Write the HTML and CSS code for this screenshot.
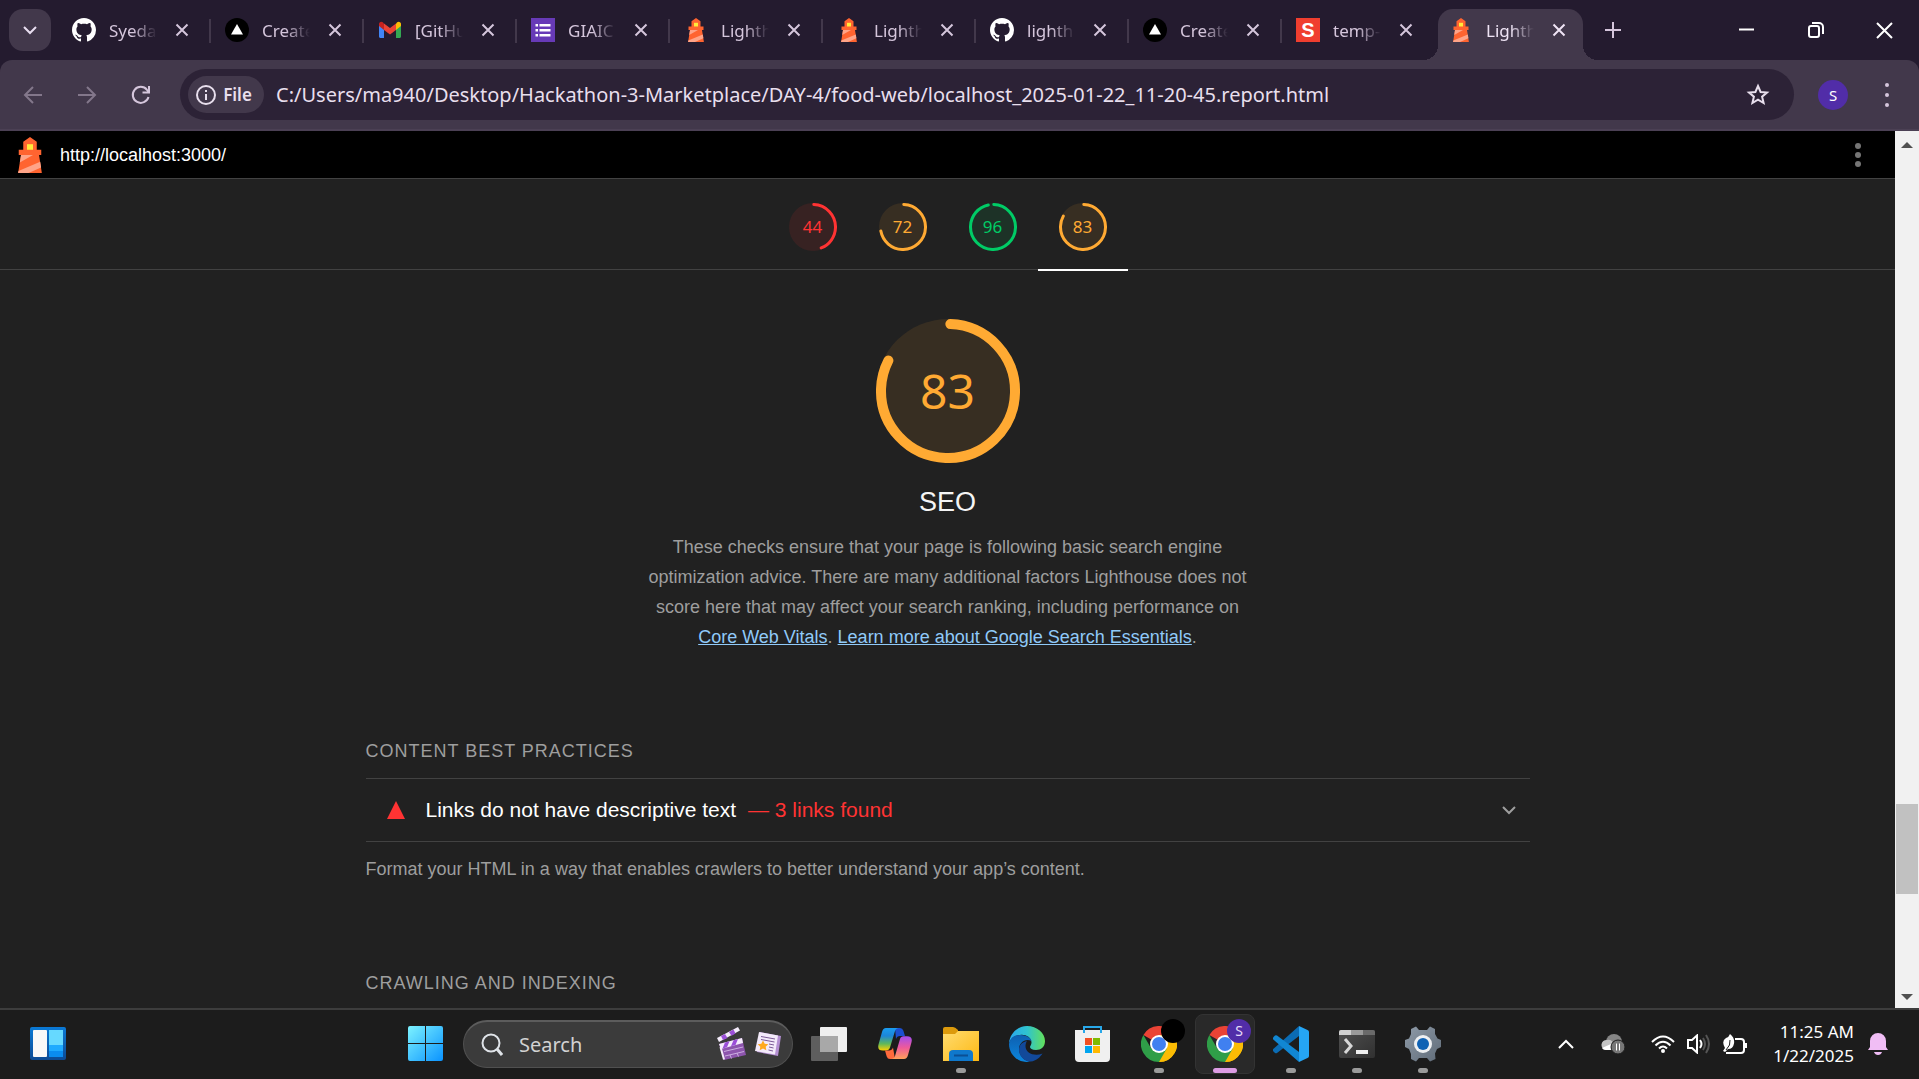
FILE: index.html
```html
<!DOCTYPE html>
<html lang="en">
<head>
<meta charset="utf-8">
<title>Lighthouse Report</title>
<meta name="viewport" content="width=device-width, initial-scale=1">
<link rel="stylesheet" href="styles.css">
</head>
<body>
<svg class="defs" aria-hidden="true">
  <defs>
    <linearGradient id="g-win" x1="0" y1="0" x2="1" y2="1"><stop offset="0" stop-color="#7df3ff"/><stop offset="1" stop-color="#0a93ff"/></linearGradient>
    <linearGradient id="g-wid" x1="0" y1="0" x2="0" y2="1"><stop offset="0" stop-color="#0a7ad6"/><stop offset="1" stop-color="#0c4a94"/></linearGradient>
    <linearGradient id="g-fold" x1="0" y1="0" x2="1" y2="1"><stop offset="0" stop-color="#ffdc70"/><stop offset="1" stop-color="#fdb813"/></linearGradient>
    <linearGradient id="g-edge1" x1="0" y1="0" x2="1" y2="0"><stop offset="0" stop-color="#2aa7ee"/><stop offset=".5" stop-color="#2fc3cf"/><stop offset="1" stop-color="#63e05a"/></linearGradient>
    <linearGradient id="g-edge2" x1="0" y1="0" x2="0" y2="1"><stop offset="0" stop-color="#0e5fb0"/><stop offset="1" stop-color="#0b86dd"/></linearGradient>
    <linearGradient id="g-cop1" x1="0" y1="0" x2="0" y2="1"><stop offset="0" stop-color="#1a9cf0"/><stop offset=".35" stop-color="#1c86d8"/><stop offset=".7" stop-color="#5fb85a"/><stop offset="1" stop-color="#ffd000"/></linearGradient>
    <linearGradient id="g-cop2" x1="0" y1="0" x2="0" y2="1"><stop offset="0" stop-color="#a24df0"/><stop offset=".5" stop-color="#ee5a9a"/><stop offset="1" stop-color="#ffa05a"/></linearGradient>
    <linearGradient id="g-grey" x1="0" y1="0" x2="1" y2="1"><stop offset="0" stop-color="#8f9ba8"/><stop offset="1" stop-color="#5f6b78"/></linearGradient>
    <linearGradient id="g-term" x1="0" y1="0" x2="1" y2="1"><stop offset="0" stop-color="#505050"/><stop offset="1" stop-color="#303030"/></linearGradient>
    <symbol id="i-x" viewBox="0 0 14 14"><path d="M1.500 1.500l11 11M12.500 1.500l-11 11" stroke="currentColor" stroke-width="2" fill="none"/></symbol>
    <symbol id="i-github" viewBox="0 0 16 16"><path fill="#fff" d="M8 0C3.580 0 0 3.580 0 8c0 3.540 2.290 6.530 5.470 7.590.4.070.55-.17.55-.38 0-.19-.01-.82-.01-1.490-2.010.37-2.530-.49-2.690-.94-.09-.23-.48-.94-.82-1.130-.28-.15-.68-.52-.01-.53.63-.01 1.080.58 1.230.82.72 1.210 1.870.87 2.330.66.07-.52.28-.87.51-1.070-1.780-.2-3.640-.89-3.640-3.950 0-.87.31-1.590.82-2.150-.08-.2-.36-1.020.08-2.120 0 0 .67-.21 2.200.82.64-.18 1.320-.27 2-.27s1.360.09 2 .27c1.530-1.040 2.200-.82 2.200-.82.44 1.100.16 1.920.08 2.120.51.56.82 1.270.82 2.150 0 3.070-1.870 3.750-3.650 3.950.29.25.54.73.54 1.480 0 1.070-.01 1.930-.01 2.200 0 .21.15.46.55.38A8.010 8.010 0 0 0 16 8c0-4.420-3.580-8-8-8z"/></symbol>
    <symbol id="i-vercel" viewBox="0 0 24 24"><circle cx="12" cy="12" r="12" fill="#000"/><path d="M12 6l6 10.500H6z" fill="#fff"/></symbol>
    <symbol id="i-gmail" viewBox="0 0 24 24"><path d="M1 6v12.500C1 19.300 1.700 20 2.500 20H6V10z" fill="#4285f4"/><path d="M23 6v12.500c0 .8-.7 1.500-1.500 1.500H18V10z" fill="#34a853"/><path d="M18 5.500V12l5-4V6c0-2-2.300-3-3.800-1.800z" fill="#fbbc04"/><path d="M6 12V5.500l6 4.600 6-4.600V12l-6 4.600z" fill="#ea4335"/><path d="M1 6v2l5 4V5.500L4.800 4.200C3.300 3 1 4 1 6z" fill="#c5221f"/></symbol>
    <symbol id="i-forms" viewBox="0 0 24 24"><path fill="#673ab7" d="M0 0h24v24H0z"/><path d="M4.500 6h2.500v2.500H4.500zM4.500 11h2.500v2.500H4.500zM4.500 16h2.500v2.500H4.500zM8.500 6h11v2.500h-11zM8.500 11h11v2.500h-11zM8.500 16h11v2.500h-11z" fill="#fff"/></symbol>
    <symbol id="i-lh" viewBox="3 0 18 24"><path d="M12 0l4.500 3.200V8.500h3V12H18l1.900 12H4.100L6 12H4.500V8.500h3V3.200z" fill="#ff6430"/><path d="M6 12h8L5.200 17zM18.800 16.500l.6 3.800L11 24H4.100l.2-1.400z" fill="#ffa488"/><path d="M10 4.800h4v3.700h-4z" fill="#ffeb3b"/></symbol>
    <symbol id="i-chrome" viewBox="0 0 36 36"><path d="M18 18L2.400 9A18 18 0 0 1 33.600 9z" fill="#ea4335"/><path d="M18 18L33.600 9A18 18 0 0 1 18 36z" fill="#fbbc04"/><path d="M18 9h15.600A18 18 0 0 1 18 36l8-13.500z" fill="#fbbc04"/><path d="M2.400 9A18 18 0 0 0 18 36l7.800-13.500L10.200 22.500z" fill="#2f9e48"/><circle cx="18" cy="18" r="9" fill="#fff"/><circle cx="18" cy="18" r="7" fill="#4080f0"/></symbol>
    <symbol id="i-chev" viewBox="0 0 14 9"><path d="M1 1l6 6 6-6" stroke="currentColor" stroke-width="2" fill="none"/></symbol>
  </defs>
</svg>

<header class="browser">
  <nav class="tabs" aria-label="Tabs">
    <button class="tab-search" aria-label="Search tabs"><svg width="14" height="9"><use href="#i-chev"/></svg></button>
    <div class="tab"><svg class="fav"><use href="#i-github"/></svg><span class="name">Syedal</span><button class="close" aria-label="Close"><svg width="14" height="14"><use href="#i-x"/></svg></button></div>
    <div class="tab"><svg class="fav"><use href="#i-vercel"/></svg><span class="name">Create</span><button class="close" aria-label="Close"><svg width="14" height="14"><use href="#i-x"/></svg></button></div>
    <div class="tab"><svg class="fav"><use href="#i-gmail"/></svg><span class="name">[GitHu</span><button class="close" aria-label="Close"><svg width="14" height="14"><use href="#i-x"/></svg></button></div>
    <div class="tab"><svg class="fav"><use href="#i-forms"/></svg><span class="name">GIAIC</span><button class="close" aria-label="Close"><svg width="14" height="14"><use href="#i-x"/></svg></button></div>
    <div class="tab"><svg class="fav"><use href="#i-lh"/></svg><span class="name">Lighth</span><button class="close" aria-label="Close"><svg width="14" height="14"><use href="#i-x"/></svg></button></div>
    <div class="tab"><svg class="fav"><use href="#i-lh"/></svg><span class="name">Lighth</span><button class="close" aria-label="Close"><svg width="14" height="14"><use href="#i-x"/></svg></button></div>
    <div class="tab"><svg class="fav"><use href="#i-github"/></svg><span class="name">lighth</span><button class="close" aria-label="Close"><svg width="14" height="14"><use href="#i-x"/></svg></button></div>
    <div class="tab"><svg class="fav"><use href="#i-vercel"/></svg><span class="name">Create</span><button class="close" aria-label="Close"><svg width="14" height="14"><use href="#i-x"/></svg></button></div>
    <div class="tab last"><span class="fav sanity">S</span><span class="name">temp-</span><button class="close" aria-label="Close"><svg width="14" height="14"><use href="#i-x"/></svg></button></div>
    <div class="tab active"><svg class="fav"><use href="#i-lh"/></svg><span class="name">Lighth</span><button class="close" aria-label="Close"><svg width="14" height="14"><use href="#i-x"/></svg></button></div>
    <button class="new-tab" aria-label="New tab"><svg width="16" height="16"><path d="M8 0v16M0 8h16" stroke="currentColor" stroke-width="2"/></svg></button>
    <div class="window-buttons">
      <button aria-label="Minimize"><svg width="16" height="16"><path d="M0 7.500h15" stroke="#fff" stroke-width="2"/></svg></button>
      <button aria-label="Restore"><svg width="16" height="16" fill="none" stroke="#fff" stroke-width="2"><rect x="1" y="4" width="10" height="11" rx="2"/><path d="M4 1h7a4 4 0 0 1 4 4v7"/></svg></button>
      <button aria-label="Close window"><svg width="17" height="17"><path d="M1 1l15 15M16 1L1 16" stroke="#fff" stroke-width="2"/></svg></button>
    </div>
  </nav>
  <div class="toolbar">
    <button class="nav dim" aria-label="Back"><svg width="20" height="20" fill="none" stroke="currentColor" stroke-width="2"><path d="M19 10H2M10 2l-8 8 8 8"/></svg></button>
    <button class="nav dim" aria-label="Forward"><svg width="20" height="20" fill="none" stroke="currentColor" stroke-width="2"><path d="M1 10h17M10 2l8 8-8 8"/></svg></button>
    <button class="nav" aria-label="Reload"><svg width="20" height="20" fill="none" stroke="currentColor" stroke-width="2"><path d="M17.500 12A8 8 0 1 1 16 4.800L18 7M18 1v6.500h-6.500"/></svg></button>
    <div class="omnibox">
      <button class="chip"><svg width="20" height="20" fill="none" stroke="currentColor" stroke-width="2"><circle cx="10" cy="10" r="9"/><path d="M10 9v6M10 5v2"/></svg>File</button>
      <input class="url" aria-label="Address" value="C:/Users/ma940/Desktop/Hackathon-3-Marketplace/DAY-4/food-web/localhost_2025-01-22_11-20-45.report.html">
      <button class="star" aria-label="Bookmark"><svg width="24" height="24" viewBox="0 0 24 24" fill="none" stroke="currentColor" stroke-width="2"><path d="M12 3l2.600 6 6.400.5-4.900 4.200 1.500 6.300L12 16.700 6.400 20l1.500-6.300L3 9.500 9.400 9z"/></svg></button>
    </div>
    <button class="avatar" aria-label="Profile">S</button>
    <button class="menu" aria-label="Menu"><svg width="4" height="24" fill="currentColor"><circle cx="2" cy="2" r="2"/><circle cx="2" cy="12" r="2"/><circle cx="2" cy="22" r="2"/></svg></button>
  </div>
</header>

<div class="viewport">
  <main class="report">
    <div class="topbar">
      <svg class="logo"><use href="#i-lh"/></svg>
      <a href="#report">http://localhost:3000/</a>
      <button aria-label="Report tools"><svg width="6" height="24" fill="#757575"><circle cx="3" cy="3" r="3"/><circle cx="3" cy="12" r="3"/><circle cx="3" cy="21" r="3"/></svg></button>
    </div>
    <div class="scores">
      <a class="score fail" href="#perf"><svg viewBox="0 0 48 48"><circle class="disc" cx="24" cy="24" r="24"/><circle class="arc" cx="24" cy="24" r="22.500" pathLength="100" stroke-dasharray="43.500 100"/></svg><span>44</span></a>
      <a class="score average" href="#a11y"><svg viewBox="0 0 48 48"><circle class="disc" cx="24" cy="24" r="24"/><circle class="arc" cx="24" cy="24" r="22.500" pathLength="100" stroke-dasharray="71.500 100"/></svg><span>72</span></a>
      <a class="score pass" href="#best"><svg viewBox="0 0 48 48"><circle class="disc" cx="24" cy="24" r="24"/><circle class="arc" cx="24" cy="24" r="22.500" pathLength="100" stroke-dasharray="96 100"/></svg><span>96</span></a>
      <a class="score average current" href="#report"><svg viewBox="0 0 48 48"><circle class="disc" cx="24" cy="24" r="24"/><circle class="arc" cx="24" cy="24" r="22.500" pathLength="100" stroke-dasharray="82.500 100"/></svg><span>83</span></a>
    </div>
    <section class="category" id="report">
      <div class="gauge average"><svg viewBox="0 0 144 144"><circle class="disc" cx="72" cy="72" r="72"/><circle class="arc" cx="72" cy="72" r="67" pathLength="100" stroke-dasharray="82 100"/></svg><span>83</span></div>
      <h1>SEO</h1>
      <p class="intro">These checks ensure that your page is following basic search engine optimization advice. There are many additional factors Lighthouse does not score here that may affect your search ranking, including performance on <a href="#vitals">Core Web Vitals</a>. <a href="#essentials">Learn more about Google Search Essentials</a>.</p>
      <div class="group">
        <h2>Content Best Practices</h2>
        <button class="audit"><svg width="18" height="18"><path d="M9 0l9 18H0z" fill="#ff3333"/></svg><span class="audit-title">Links do not have descriptive text</span><span class="audit-value">— 3 links found</span><svg class="expand" width="14" height="9"><use href="#i-chev"/></svg></button>
        <p>Format your HTML in a way that enables crawlers to better understand your app’s content.</p>
      </div>
      <div class="group">
        <h2>Crawling and Indexing</h2>
      </div>
    </section>
  </main>
  <div class="scrollbar" aria-hidden="true">
    <svg width="12" height="6"><path d="M6 0l6 6H0z" fill="#505050"/></svg>
    <div class="track"><div class="thumb"></div></div>
    <svg width="12" height="6"><path d="M0 0h12L6 6z" fill="#505050"/></svg>
  </div>
</div>

<footer class="taskbar">
  <div class="widgets"><button aria-label="Widgets"><svg width="36" height="33"><rect width="36" height="33" rx="2" fill="url(#g-wid)"/><rect x="3" y="3" width="14" height="27" rx="1" fill="#f8f8f8"/><path d="M19 3h14v15H19z" fill="#66d9ff"/><path d="M19 18h14v6H19z" fill="#1eaaff"/><path d="M19 24h14v6H19z" fill="#0a8cf0"/></svg></button></div>
  <button class="app start" aria-label="Start"><svg width="36" height="36"><path d="M0 2q0-2 2-2h15v17H0zM18 0h15q2 0 2 2v15H18zM0 18h17v17H2q-2 0-2-2zM18 18h17v15q0 2-2 2H18z" fill="url(#g-win)"/></svg></button>
  <div class="search">
    <svg width="22" height="23" fill="none" stroke="#dfe3e8"><circle cx="10" cy="10" r="8.500" stroke-width="2"/><path d="M16 16l5 6" stroke-width="3"/></svg>
    <input aria-label="Search" placeholder="Search">
    <svg width="30" height="34" viewBox="0 0 30 34"><path d="M0 11L21 0l2 3.500L2 15z" fill="#f5edfb"/><path d="M4 9l4-2 2.500 4-4.500 2zM12 5l4.500-2.500 2 4-4 2.300z" fill="#9b4fd8"/><path d="M2 17l23-6 4 17L7 33z" fill="#8d55ad"/><path d="M2 17l23-6 1 5L4 22z" fill="#f5edfb"/><path d="M8 15.500l4.500-1.200-2.500 6-4.500 1.200zM16.500 13.200l4.500-1.200-2.500 6-4.500 1.200z" fill="#9b4fd8"/><path d="M7 24.500l19-4.500M8 29l19-4.500M13 28l1.500 3.500M20 26l1.500 3.500" stroke="#cbaee0" fill="none"/><path d="M3.500 20L7 32.500" stroke="#f5edfb" stroke-width="2"/></svg>
    <svg width="26" height="24" viewBox="0 0 26 24"><path d="M5 0l21 4-3 20-21-4z" fill="#b48fd2"/><path d="M4 0l19 3.500-3 19L0 19z" fill="#f3eafa"/><path d="M6 4.500l14 2.500M6 7.500l13.500 2.500M14 12l5 1M14 15l4.500 1M13.500 18l4.500 1" stroke="#7b5a96" fill="none"/><path d="M8 8.500l1.700 3.200 3.600.5-2.600 2.500.6 3.600-3.300-1.700-3.300 1.700.6-3.600-2.600-2.500 3.600-.5z" fill="#ffa91f"/></svg>
  </div>
  <button class="app" aria-label="Task view"><svg width="36" height="34"><rect x="9" width="27" height="25" rx="1" fill="#efefef"/><rect y="9" width="27" height="25" rx="1" fill="#5e5e5e"/><path d="M9 9h18v16H9z" fill="#a8a8a8"/></svg></button>
  <button class="app" aria-label="Copilot"><svg width="34" height="31" viewBox="0 0 34 31"><path d="M17 0h5q2.500 0 3.300 2.600L27 8h-5q-3 0-4 3z" fill="#1c4fd0"/><path d="M8 0h13q-3 0-4 3l-5 16.500q-1 3-4 3H5q-6 0-4.500-6L4 4Q5 0 8 0z" fill="url(#g-cop1)"/><path d="M17 31h-5q-2.500 0-3.300-2.600L7 22.500h4q3 0 4-3z" fill="#ff6a3c"/><path d="M26 31H13q3 0 4-3l5-17q.8-2.800 3.500-2.800H29q6 0 4.500 6L30 27q-1 4-4 4z" fill="url(#g-cop2)"/></svg></button>
  <button class="app" aria-label="File Explorer"><svg width="36" height="34"><path d="M0 2q0-2 2-2h8q2 0 5 3v5H0z" fill="#dc9a0c"/><path d="M0 7h12l3-3h21v30H0z" fill="url(#g-fold)"/><path d="M6 34v-7q0-4 4-4h16q4 0 4 4v7z" fill="#0f78cc"/><path d="M11 28.500h14" stroke="#0b4f94" stroke-width="2"/></svg><i></i></button>
  <button class="app" aria-label="Edge"><svg width="36" height="36" viewBox="0 0 36 36"><path d="M0 17C1 7 9 0 18 0c10 0 18 7 18 15 0 6-4 9-9 9-4 0-6-1.500-6-3 0-1 1.500-2 1.500-4.500C22.500 11 16 8 11 9 6 9.500 2 12 0 17z" fill="url(#g-edge1)"/><path d="M0 18c1-7 7-9.500 12-9 6 .5 10 3 10.500 6C16 12 10 17 10 23c0 6 5 12 11 12.500C10 38 0 29 0 18z" fill="url(#g-edge2)"/><path d="M18 15c-5 1-8 4-8 9 0 6 6 12 12 11.500 5-.5 9-4 11.500-8-2 .8-4 1.300-6 1.300-6 0-11-3.500-11-8.500 0-2 .5-4 1.500-5.300z" fill="#12499a"/></svg></button>
  <button class="app" aria-label="Store"><svg width="36" height="36"><path d="M0 4h35v28q0 4-4 4H4q-4 0-4-4z" fill="#f0f0f0"/><path d="M9 7V1h17v6" fill="none" stroke="#28a8ea" stroke-width="2"/><path d="M10 12h7v7h-7z" fill="#f25022"/><path d="M18 12h7v7h-7z" fill="#7fba00"/><path d="M10 20h7v7h-7z" fill="#00a4ef"/><path d="M18 20h7v7h-7z" fill="#ffb900"/></svg></button>
  <button class="app" aria-label="Chrome"><svg width="36" height="36"><use href="#i-chrome"/></svg><b></b><i></i></button>
  <button class="app open" aria-label="Chrome, active"><svg width="36" height="36"><use href="#i-chrome"/></svg><b>S</b><i></i></button>
  <button class="app" aria-label="Visual Studio Code"><svg width="36" height="36" viewBox="0 0 36 36"><path d="M26 0v10L4 27q-1 .7-2 0l-2-2q-.8-1 0-1.800z" fill="#0b6cb4"/><path d="M26 36V26L4 9.500q-1-.7-2 0l-2 2q-.8 1 0 1.800z" fill="#1187d3"/><path d="M26 0l8.500 4Q36 4.700 36 6v24q0 1.300-1.500 2L26 36z" fill="#25a5f4"/></svg><i></i></button>
  <button class="app" aria-label="Terminal"><svg width="36" height="28"><rect width="36" height="28" rx="2" fill="url(#g-term)"/><path d="M0 5V2q0-2 2-2h10v5z" fill="#d0d0d0"/><path d="M12 0h12v5H12z" fill="#9a9a9a"/><path d="M24 0h10q2 0 2 2v3H24z" fill="#6a6a6a"/><path d="M6 9l6 7-6 7" fill="none" stroke="#d8d8d8" stroke-width="3"/><path d="M17 20h12v4H17z" fill="#eee"/></svg><i></i></button>
  <button class="app" aria-label="Settings"><svg width="36" height="36" viewBox="-18 -18 36 36"><path d="M-12-15l5-2.500L-4-14h8l3-3.500L12-15l0 5 2.500 4.500L18-4v7l-4 2-2 4.500L12.500 15 7 17.500 4 14h-8l-3 3.500L-12 15v-5l-2-5-4-2v-7l4-1.500 2-4.500z" fill="url(#g-grey)"/><circle r="9" fill="#eef0f2"/><circle r="6" fill="#0f62b4"/></svg><i></i></button>
  <div class="tray">
    <button class="t-more" aria-label="Hidden icons"><svg width="16" height="10"><path d="M1 9l7-7 7 7" stroke="#fff" stroke-width="2" fill="none"/></svg></button>
    <button class="t-cloud" aria-label="OneDrive"><svg width="24" height="20"><circle cx="13" cy="8" r="8" fill="#858585"/><path d="M5 16a5 5 0 1 1 1-10q4-1 6 3l6 3v4z" fill="#c4c4c4"/><path d="M1 14l9-4 5 6H5q-3 0-4-2z" fill="#fff"/><circle cx="17" cy="13" r="7" fill="#777" stroke="#1c1c1c"/><path d="M15.500 9.500v7M18.500 9.500v7" stroke="#fff"/></svg></button>
    <button class="t-net" aria-label="Network, volume and battery">
      <svg width="24" height="18" viewBox="0 0 24 18" fill="none" stroke="#fff" stroke-width="2"><path d="M1 7q11-11 22 0M4.500 10.500q7.500-7.500 15 0M8 13.500q4-4 8 0"/><circle cx="12" cy="16" r="1"/></svg>
      <svg width="24" height="20" viewBox="0 0 24 20" fill="none" stroke="#fff" stroke-width="2"><path d="M1 6h4l5-4.500v17L5 14H1z"/><path d="M13 6q3 4 0 8"/><path d="M16 4q4 6 0 12M19 1q6 9 0 18" stroke="#555"/></svg>
      <svg width="24" height="20" viewBox="0 0 24 20"><path d="M12 5h6q3 0 3 3v8q0 3-3 3H3" fill="none" stroke="#fff" stroke-width="2"/><path d="M21 9h3v5h-3z" fill="#fff"/><path d="M7 0q5 4 4 9.500T5 15l-3 3-2-1 2-3Q-2 7 3 4q3-1 4-4z" fill="#fff"/><path d="M7 6q1 5-4 10" stroke="#1c1c1c" fill="none"/></svg>
    </button>
    <time class="clock"><span>11:25 AM</span><span>1/22/2025</span></time>
    <button class="t-bell" aria-label="Notifications"><svg width="20" height="23"><path d="M2 9a8 8 0 0 1 16 0v6l2 3H0l2-3z" fill="#f0bdf5"/><path d="M6 20h8q-1 3-4 3t-4-3z" fill="#f0bdf5"/></svg></button>
  </div>
</footer>
</body>
</html>
```

FILE: styles.css
```css
* { box-sizing: border-box; }
body {
  margin: 0;
  height: 100vh;
  display: flex;
  flex-direction: column;
  overflow: hidden;
  background: #212121;
  font-family: "Noto Sans", sans-serif;
}
button, input { margin: 0; padding: 0; border: 0; background: none; color: inherit; font: inherit; outline: 0; }
button { display: flex; align-items: center; justify-content: center; flex: none; }
svg { display: block; flex: none; }
.defs { position: absolute; width: 0; height: 0; }

/* Browser frame */
.browser { background: #241b2f; color: #d5c6dc; }
.tabs { display: flex; height: 60px; padding: 9px 0 0 9px; }
.tab-search { width: 42px; height: 42px; margin-right: 6px; border-radius: 14px; background: #42384b; color: #e8def0; }
.tab { position: relative; display: flex; align-items: center; width: 153px; height: 51px; padding: 0 0 9px 15px; }
.tab:not(.last):not(.active)::after { content: ""; position: absolute; right: -1px; top: 10px; width: 2px; height: 24px; background: #42384b; }
.fav { width: 24px; height: 24px; flex: none; }
.sanity { background: #f03e2f; color: #fff; font: bold 20px/24px "Liberation Sans", sans-serif; text-align: center; }
.name { width: 48px; margin-left: 13px; padding-top: 2px; overflow: hidden; white-space: nowrap; font-size: 17px; line-height: 24px; -webkit-mask-image: linear-gradient(90deg, #000 50%, transparent); mask-image: linear-gradient(90deg, #000 50%, transparent); }
.close { width: 24px; height: 24px; margin-left: 13px; }
.tab.active { width: 145px; margin-left: 4px; padding-left: 11px; background: #42384b; border-radius: 15px 15px 0 0; color: #efe4f5; }
.tab.active::before { content: ""; position: absolute; left: -15px; right: -15px; bottom: 0; height: 15px; background: radial-gradient(circle at 0 0, transparent 15px, #42384b 15px) left / 15px 15px no-repeat, radial-gradient(circle at 100% 0, transparent 15px, #42384b 15px) right / 15px 15px no-repeat; }
.new-tab { width: 42px; height: 42px; margin-left: 9px; }
.window-buttons { display: flex; margin: -9px 0 0 auto; }
.window-buttons button { width: 69px; height: 60px; }
.toolbar { display: flex; align-items: center; height: 71px; padding: 0 15px 0 6px; background: #42384b; border-bottom: 2px solid #4b4054; border-radius: 12px 12px 0 0; }
.nav { width: 54px; height: 48px; }
.nav.dim { color: #83778b; }
.omnibox { flex: 1; display: flex; align-items: center; height: 51px; margin-left: 12px; padding: 0 24px 0 8px; border-radius: 26px; background: #2c2236; color: #e8dfed; }
.chip { gap: 7px; width: 76px; height: 37px; padding-right: 4px; border-radius: 19px; background: #42384b; font-size: 17px; font-weight: 600; }
.url { flex: 1; min-width: 0; margin: 0 12px; font-size: 20px; line-height: 30px; }
.avatar { width: 30px; height: 30px; margin-left: 24px; border-radius: 15px; background: #512da8; color: #fff; font-size: 15px; }
.menu { width: 34px; height: 34px; margin-left: 22px; }

/* Report page */
.viewport { flex: 1; min-height: 0; display: flex; }
.report { flex: 1; min-width: 0; overflow: hidden; background: #212121; color: #9e9e9e; font: 18px/30px "Liberation Sans", sans-serif; }
.topbar { display: flex; align-items: center; height: 48px; padding: 0 27px 0 12px; background: #000; border-bottom: 1px solid #424242; }
.logo { width: 36px; height: 36px; margin-right: 12px; }
.topbar a { color: #fff; text-decoration: none; }
.topbar button { width: 20px; height: 36px; margin-left: auto; }
.scores { display: flex; justify-content: center; height: 91px; border-bottom: 1px solid #424242; font-family: "Noto Sans", sans-serif; }
.score { position: relative; display: flex; justify-content: center; width: 90px; height: 92px; padding-top: 24px; font-size: 17px; text-decoration: none; }
.score svg { width: 48px; height: 48px; }
.score span { position: absolute; top: 24px; line-height: 48px; }
.current { border-bottom: 2px solid #fff; }
.disc { fill: currentColor; opacity: .1; }
.arc { fill: none; stroke: currentColor; stroke-width: 3; stroke-linecap: round; transform: rotate(-88deg); transform-origin: center; }
.fail { color: #f33; }
.average { color: #fa3; }
.pass { color: #0c6; }
.category { max-width: 1164px; margin: 0 auto; padding-top: 49px; }
.gauge { position: relative; display: flex; justify-content: center; font-family: "Noto Sans", sans-serif; }
.gauge svg { width: 144px; height: 144px; }
.gauge .arc { stroke-width: 10; }
.gauge span { position: absolute; font-size: 48px; line-height: 144px; }
h1 { margin: 18px 0 9px; color: #f5f5f5; font-size: 27px; font-weight: 400; line-height: 42px; text-align: center; }
.intro { width: 600px; margin: 0 auto; text-align: center; }
.intro a { color: #90caf9; }
.group { margin-top: 84px; }
h2 { margin: 0 0 12px; font-size: 18px; font-weight: 400; line-height: 30px; letter-spacing: 1px; text-transform: uppercase; }
.audit { width: 100%; height: 64px; padding: 0 14px 0 21px; justify-content: flex-start; border: solid #424242; border-width: 1px 0; font-size: 21px; }
.audit-title { margin: 0 12px 0 21px; color: #fff; }
.audit-value { color: #f33; }
.expand { margin-left: auto; }
.group p { margin: 12px 0 0; }
.scrollbar { width: 24px; padding: 11px 0 8px; display: flex; flex-direction: column; align-items: center; gap: 8px; background: #f1f1f1; }
.track { flex: 1; align-self: stretch; display: flex; flex-direction: column; padding: 0 1px; }
.track::before { content: ""; flex: 646; }
.track::after { content: ""; flex: 92; }
.thumb { height: 90px; background: #c1c1c1; }

/* Taskbar */
.taskbar { display: flex; align-items: center; height: 71px; padding-bottom: 2px; background: #1c1c1c; border-top: 2px solid #3d3d3d; color: #fff; }
.widgets { width: 396px; padding-left: 30px; }
.app { position: relative; width: 60px; height: 60px; margin: 0 3px; border-radius: 8px; }
.app.start { margin: 0 7px 0 0; }
.app i { position: absolute; bottom: 1px; left: 25px; width: 10px; height: 5px; border-radius: 3px; background: #9a9a9a; }
.app b { position: absolute; top: 5px; right: 4px; width: 24px; height: 24px; border-radius: 12px; background: #000; font: 14px/24px "Noto Sans", sans-serif; }
.app.open { background: #292929; border: 1px solid #333; }
.open b { top: 4px; right: 3px; background: #512da8; color: #e6dcf8; }
.app.open i { left: 17px; bottom: 0; width: 24px; background: #dd9ce4; }
.search { display: flex; align-items: center; width: 330px; height: 48px; margin-right: 3px; padding: 0 11px 0 17px; border: 1px solid #505050; border-top: 2px solid #5c5c5c; border-radius: 24px; background: #3b3b3b; }
.search input { flex: 1; min-width: 0; margin-left: 16px; font-size: 20px; color: #fff; }
.search input::placeholder { color: #d2d2d2; opacity: 1; }
.search svg:last-child { margin-left: 8px; }
.tray { display: flex; align-items: center; margin-left: auto; padding-right: 31px; }
.t-more { width: 42px; height: 48px; }
.t-cloud { width: 52px; height: 48px; }
.t-net { gap: 12px; width: 120px; height: 48px; }
.clock { display: flex; flex-direction: column; align-items: flex-end; width: 95px; margin-right: 14px; font-size: 17px; line-height: 24px; }
```
